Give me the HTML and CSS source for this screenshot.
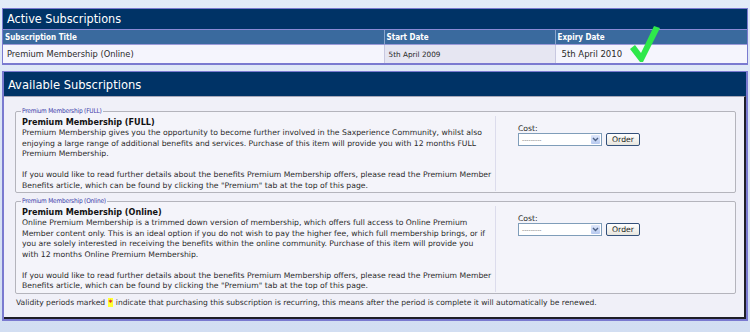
FILE: index.html
```html
<!DOCTYPE html>
<html lang="en">
<head>
    <meta charset="UTF-8">
    <title>Subscriptions</title>
    <link rel="stylesheet" href="styles.css">
</head>
<body>
    <div class="panel active">
        <div class="panel-title">Active Subscriptions</div>
        <table class="subs">
            <colgroup>
                <col class="col-title">
                <col class="col-start">
                <col>
            </colgroup>
            <tr>
                <th>Subscription Title</th>
                <th>Start Date</th>
                <th>Expiry Date</th>
            </tr>
            <tr>
                <td>Premium Membership (Online)</td>
                <td class="start">5th April 2009</td>
                <td class="expiry">5th April 2010</td>
            </tr>
        </table>
        <svg class="tick" width="34" height="40" viewBox="0 0 34 40">
            <polygon points="3,25 8,21 14,29 27,2 33,4 16,38 13,38" fill="#2ee84a"/>
        </svg>
    </div>

    <div class="panel available">
        <div class="panel-title tall">Available Subscriptions</div>
        <div class="panel-body">
            <fieldset class="offer">
                <legend>Premium Membership (FULL)</legend>
                <div class="offer-info">
                    <h3>Premium Membership (FULL)</h3>
                    <p>Premium Membership gives you the opportunity to become further involved in the Saxperience Community, whilst also enjoying a large range of additional benefits and services. Purchase of this item will provide you with 12 months FULL Premium Membership.<br><br>If you would like to read further details about the benefits Premium Membership offers, please read the Premium Member Benefits article, which can be found by clicking the "Premium" tab at the top of this page.</p>
                </div>
                <div class="offer-buy">
                    <label>Cost:</label>
                    <div class="buy-row">
                        <div class="select">
                            <span class="select-value">---------</span>
                            <span class="select-arrow">
                                <svg width="7" height="5" viewBox="0 0 7 5"><path d="M1 1 L3.5 3.5 L6 1" stroke="#4d6185" stroke-width="1.4" fill="none"/></svg>
                            </span>
                        </div>
                        <button class="order">Order</button>
                    </div>
                </div>
            </fieldset>

            <fieldset class="offer">
                <legend>Premium Membership (Online)</legend>
                <div class="offer-info">
                    <h3>Premium Membership (Online)</h3>
                    <p>Online Premium Membership is a trimmed down version of membership, which offers full access to Online Premium Member content only. This is an ideal option if you do not wish to pay the higher fee, which full membership brings, or if you are solely interested in receiving the benefits within the online community. Purchase of this item will provide you with 12 months Online Premium Membership.<br><br>If you would like to read further details about the benefits Premium Membership offers, please read the Premium Member Benefits article, which can be found by clicking the "Premium" tab at the top of this page.</p>
                </div>
                <div class="offer-buy">
                    <label>Cost:</label>
                    <div class="buy-row">
                        <div class="select">
                            <span class="select-value">---------</span>
                            <span class="select-arrow">
                                <svg width="7" height="5" viewBox="0 0 7 5"><path d="M1 1 L3.5 3.5 L6 1" stroke="#4d6185" stroke-width="1.4" fill="none"/></svg>
                            </span>
                        </div>
                        <button class="order">Order</button>
                    </div>
                </div>
            </fieldset>

            <p class="note">Validity periods marked <span class="mark">*</span> indicate that purchasing this subscription is recurring, this means after the period is complete it will automatically be renewed.</p>
        </div>
    </div>
</body>
</html>
```

FILE: styles.css
```css
body {
    margin: 0;
    height: 332px;
    overflow: hidden;
    font-family: "DejaVu Sans", Verdana, sans-serif;
    font-size: 7.7px;
    color: #2a2a2a;
    background: linear-gradient(180deg, #e3ebf8 0%, #dbe5f5 40%, #d2def2 100%);
}

.panel {
    margin: 8px 2px 0 2px;
    border: 1px solid #7a7ad0;
    background-color: #f5f5fd;
}

.active {
    position: relative;
    border-bottom-width: 2px;
}

.available {
    margin-top: 6px;
    border-width: 1px 2px 2px 2px;
}

.panel-title {
    background-color: #003366;
    color: #ffffff;
    font-family: "DejaVu Sans Condensed", "DejaVu Sans", sans-serif;
    font-size: 12.5px;
    height: 20px;
    line-height: 20px;
    padding-left: 4px;
    border-bottom: 1px solid #8a8ad6;
}

.panel-title.tall {
    height: 24px;
    line-height: 25px;
    font-size: 12.8px;
    border-bottom: none;
}

/* active subscriptions table */
.subs {
    width: 100%;
    table-layout: fixed;
    border-collapse: collapse;
}

.subs .col-title {
    width: 381px;
}

.subs .col-start {
    width: 171px;
}

.subs th {
    background-color: #3a6a9e;
    color: #ffffff;
    font-family: "DejaVu Sans Condensed", "DejaVu Sans", sans-serif;
    font-size: 8px;
    font-weight: bold;
    text-align: left;
    height: 14px;
    padding: 0 2px;
    border-right: 1px solid #8aa6cc;
    border-bottom: 1px solid #9a9ad8;
}

.subs td {
    height: 18px;
    padding: 0 4px;
    font-size: 8.3px;
    border-right: 1px solid #c8c8e0;
}

.subs th:last-child,
.subs td:last-child {
    border-right: none;
}

.subs td.start {
    background-color: #e6e6f2;
    font-size: 7.3px;
}

.subs td.expiry {
    font-size: 8.5px;
    padding-left: 6px;
}

.tick {
    position: absolute;
    left: 624px;
    top: 15px;
}

/* available subscriptions */
.panel-body {
    background-color: #f0f0f8;
    border-top: 1px solid #a8a8b8;
    border-right: 2px solid #1e1e28;
    border-bottom: 2px solid #1e1e28;
    padding: 10px 8px 9px 11px;
}

.offer {
    display: flex;
    margin: 0 0 4px 0;
    padding: 1px 0 1px 6px;
    border: 1px solid #b4b4bc;
    border-radius: 2px;
    background-color: #f4f4fa;
}

.offer legend {
    font-family: "DejaVu Sans Condensed", "DejaVu Sans", sans-serif;
    font-size: 6.5px;
    line-height: 8px;
    letter-spacing: -0.2px;
    color: #3a3aa8;
    padding: 0 1px;
    margin-left: -1px;
}

.offer-info {
    width: 470px;
    padding-right: 3px;
    border-right: 1px solid #dcdcec;
    line-height: 10.5px;
}

.offer-info h3 {
    margin: 0;
    font-size: 8.1px;
    line-height: 12px;
    color: #111111;
}

.offer-info p {
    margin: 0;
}

.offer-buy {
    padding-left: 22px;
    padding-top: 8px;
}

.offer-buy label {
    display: block;
    line-height: 9px;
}

.buy-row {
    display: flex;
    align-items: center;
    gap: 4px;
}

.select {
    display: flex;
    align-items: center;
    justify-content: space-between;
    width: 82px;
    height: 11px;
    border: 1px solid #7f9db9;
    background-color: #ffffff;
}

.select-value {
    font-size: 6px;
    color: #666666;
    padding-left: 3px;
    line-height: 10px;
}

.select-arrow {
    display: flex;
    align-items: center;
    justify-content: center;
    width: 9px;
    height: 9px;
    margin-right: 1px;
    border-radius: 1px;
    background: linear-gradient(180deg, #dfe8fb, #b7c9ef);
}

.order {
    font-family: "DejaVu Sans", Verdana, sans-serif;
    font-size: 7.7px;
    height: 13px;
    width: 34px;
    padding: 0;
    border: 1px solid #33507a;
    border-radius: 2px;
    background: linear-gradient(180deg, #ffffff, #e8e6de);
    color: #222222;
}

.note {
    margin: 4px 0 0 1px;
    font-size: 7.55px;
    line-height: 10.5px;
}

.mark {
    background-color: #ffff33;
    color: #e02020;
    font-weight: bold;
    padding: 0 1px;
}
```
